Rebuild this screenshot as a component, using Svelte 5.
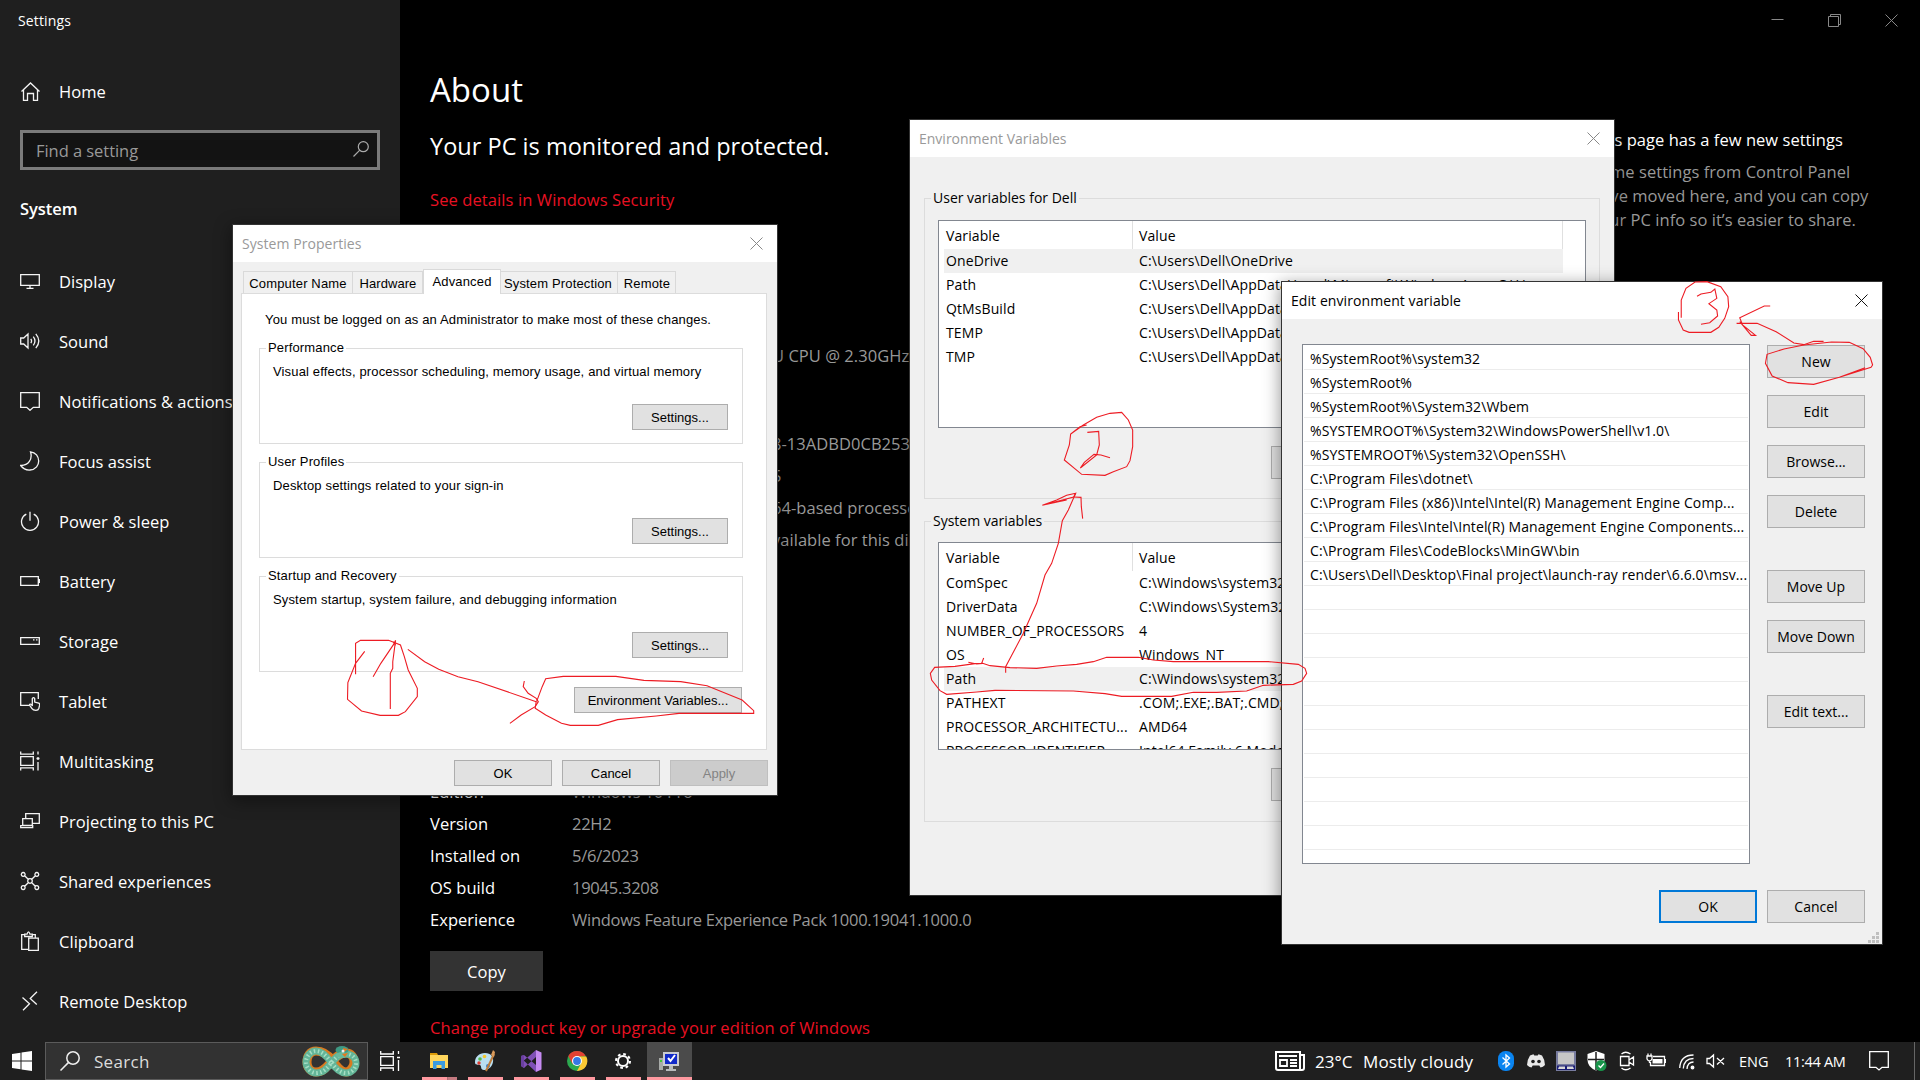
<script>
  const nav = [
    { label: 'Display', d: 'M.7 3.7h18.6v10.6H.7zM10 14.5v2.300M6.500 17.300h7' },
    { label: 'Sound', d: 'M.7 7v6h3l4.300 4V3L3.700 7zM10.800 7.800q1.500 2.200 0 4.400M13.300 5.700q3.300 4.300 0 8.600M15.800 2.800q6 7.200 0 14.400' },
    { label: 'Notifications & actions', d: 'M.7 1.700h18.600v14.600h-6L10 19.300l-3.300-3H.7z' },
    { label: 'Focus assist', d: 'M10.500.8c10.500 1 11.500 17.200-.5 18.200-4.300.3-7.300-1.700-9.300-4.500C8.500 14.700 12.800 8 10.500.8z' },
    { label: 'Power & sleep', d: 'M10 .7v9M6.300 3.200a8.500 8.500 0 1 0 7.400 0' },
    { label: 'Battery', d: 'M.7 5.700h17.600v8.600H.7zM19.500 8v4' },
    { label: 'Storage', d: 'M.7 6.700h18.600v6.600H.7zM13 8.900h1.500M16 8.900h1.500' },
    { label: 'Tablet', d: 'M9 14.300H.7V1.700h17.600V8M12.300 15V7.500q1.200-1.700 2.400 0V11l4 1.200q1.200.4.900 2l-.7 3q-.6 2.100-3 2.100-2.800 0-3.900-1.700l-2.500-3.600q.2-1.500 2-.5z' },
    { label: 'Multitasking', d: 'M.7.500v2.700h12.600V.5M.7 5.700h12.600v8.600H.7zM.7 19.500v-2.700h12.600v2.700M18 .5v3M18 11v8.500M16.500 7.500h3M18 6v3' },
    { label: 'Projecting to this PC', d: 'M5.700 7V2.700h13.600v9.600h-6.500M2.700 7.700h9.600v6.600H2.700zM.7 14.700h12v2H.7z' },
    { label: 'Shared experiences', d: 'M4.700 4.700l3.500 3.500M15.300 4.700l-3.500 3.500M4.700 15.300l3.500-3.500M15.300 15.300l-3.500-3.500M3.200 1.500a1.900 1.900 0 1 0 .01 0zM16.800 1.500a1.900 1.900 0 1 0 .01 0zM3.200 14.700a1.900 1.900 0 1 0 .01 0zM16.800 14.700a1.900 1.900 0 1 0 .01 0zM10 7.700a2.300 2.300 0 1 0 .01 0z' },
    { label: 'Clipboard', d: 'M8 18.300H1.700V3.700h3V5.500h7.600V3.700h3v3M4.700 5.500V3.200h2.300q1.500-4.500 3 0h2.300v2.300M8.700 7.200h9.600v12.100H8.700z' },
    { label: 'Remote Desktop', d: 'M17 .7L10.200 7.500l6.600 6M2.500 6.500l7 6.300-6.500 6.500' }
  ];

  const fragments = ['U CPU @ 2.30GHz', '', '8-13ADBD0CB253', '5', '64-based processor', 'vailable for this display'];

  const specs = [
    ['Edition', 'Windows 10 Pro'],
    ['Version', '22H2'],
    ['Installed on', '5/6/2023'],
    ['OS build', '19045.3208'],
    ['Experience', 'Windows Feature Experience Pack 1000.19041.1000.0']
  ];

  const groups = [
    ['Performance', 'Visual effects, processor scheduling, memory usage, and virtual memory'],
    ['User Profiles', 'Desktop settings related to your sign-in'],
    ['Startup and Recovery', 'System startup, system failure, and debugging information']
  ];

  const tables = [
    {
      title: 'User variables for Dell',
      selected: 0,
      rows: [
        ['OneDrive', 'C:\\Users\\Dell\\OneDrive'],
        ['Path', 'C:\\Users\\Dell\\AppData\\Local\\Microsoft\\WindowsApps;C:\\Users...'],
        ['QtMsBuild', 'C:\\Users\\Dell\\AppData'],
        ['TEMP', 'C:\\Users\\Dell\\AppData'],
        ['TMP', 'C:\\Users\\Dell\\AppData']
      ]
    },
    {
      title: 'System variables',
      selected: 4,
      rows: [
        ['ComSpec', 'C:\\Windows\\system32'],
        ['DriverData', 'C:\\Windows\\System32'],
        ['NUMBER_OF_PROCESSORS', '4'],
        ['OS', 'Windows_NT'],
        ['Path', 'C:\\Windows\\system32'],
        ['PATHEXT', '.COM;.EXE;.BAT;.CMD;.'],
        ['PROCESSOR_ARCHITECTU...', 'AMD64'],
        ['PROCESSOR_IDENTIFIER', 'Intel64 Family 6 Model']
      ]
    }
  ];

  const paths = [
    '%SystemRoot%\\system32',
    '%SystemRoot%',
    '%SystemRoot%\\System32\\Wbem',
    '%SYSTEMROOT%\\System32\\WindowsPowerShell\\v1.0\\',
    '%SYSTEMROOT%\\System32\\OpenSSH\\',
    'C:\\Program Files\\dotnet\\',
    'C:\\Program Files (x86)\\Intel\\Intel(R) Management Engine Comp...',
    'C:\\Program Files\\Intel\\Intel(R) Management Engine Components...',
    'C:\\Program Files\\CodeBlocks\\MinGW\\bin',
    'C:\\Users\\Dell\\Desktop\\Final project\\launch-ray render\\6.6.0\\msv...',
    ...Array(11).fill('')
  ];
</script>

{#snippet cross()}
  <svg class="cross" viewBox="0 0 13 13"><path d="M.5.5l12 12M12.500.5l-12 12" /></svg>
{/snippet}

<div class="screen">
  <div class="settings">
    <aside>
      <div class="apptitle">Settings</div>
      <div class="home item">
        <svg viewBox="0 0 20 20"><path d="M1.500 9.500L10.500 1l9 8.500M3.500 8v10.300h4V11.500h6v6.800h4V8" /></svg>
        <span>Home</span>
      </div>
      <div class="find">
        <span>Find a setting</span>
        <svg viewBox="0 0 16 16"><circle cx="10.300" cy="5.700" r="5" /><path d="M6.800 9.200L.5 15.500" /></svg>
      </div>
      <div class="section">System</div>
      <nav>
        {#each nav as n}
          <div class="item">
            <svg viewBox="0 0 20 20"><path d={n.d} /></svg>
            <span>{n.label}</span>
          </div>
        {/each}
      </nav>
    </aside>

    <main>
      <h1>About</h1>
      <h2>Your PC is monitored and protected.</h2>
      <div class="link">See details in Windows Security</div>
      <div class="device">
        {#each fragments as f}<div>{f}</div>{/each}
      </div>
      <div class="specs">
        {#each specs as [k, v]}
          <div class="spec"><span>{k}</span><span class="dim">{v}</span></div>
        {/each}
      </div>
      <button class="copy">Copy</button>
      <div class="link key">Change product key or upgrade your edition of Windows</div>
    </main>

    <section class="side">
      <div class="winctl">
        <svg viewBox="0 0 13 13"><path d="M.5 5.500h12" /></svg>
        <svg viewBox="0 0 13 13"><path d="M.5 2.500h10v10H.5zM2.500 2.500v-2h10v10h-2" /></svg>
        <svg viewBox="0 0 13 13"><path d="M.5.5l12 12M12.500.5l-12 12" /></svg>
      </div>
      <div class="note">
        <b>This page has a few new settings</b>
        <p>Some settings from Control Panel<br />have moved here, and you can copy<br />your PC info so it’s easier to share.</p>
      </div>
    </section>
  </div>

  <div class="dialog env">
    <header><span>Environment Variables</span>{@render cross()}</header>
    <div class="envbody">
      {#each tables as t}
        <fieldset class="group">
          <legend>{t.title}</legend>
          <div class="table">
            <div class="tr head"><span>Variable</span><span>Value</span></div>
            {#each t.rows as [a, b], i}
              <div class="tr" class:sel={i === t.selected}><span>{a}</span><span>{b}</span></div>
            {/each}
          </div>
          <div class="actions"><button aria-label="New"></button></div>
        </fieldset>
      {/each}
    </div>
  </div>

  <div class="dialog props">
    <header><span>System Properties</span>{@render cross()}</header>
    <div class="tabs">
      <div class="tab t1">Computer Name</div>
      <div class="tab t2">Hardware</div>
      <div class="tab t3">Advanced</div>
      <div class="tab t4">System Protection</div>
      <div class="tab t5">Remote</div>
    </div>
    <div class="pane">
      <div class="hint">You must be logged on as an Administrator to make most of these changes.</div>
      {#each groups as [t, d]}
        <fieldset class="pgroup">
          <legend>{t}</legend>
          <div class="desc">{d}</div>
          <button>Settings...</button>
        </fieldset>
      {/each}
      <button class="envbtn">Environment Variables...</button>
    </div>
    <footer><button>OK</button><button>Cancel</button><button disabled>Apply</button></footer>
  </div>

  <div class="dialog edit">
    <header><span>Edit environment variable</span>{@render cross()}</header>
    <div class="editbody">
      <div class="list">
        {#each paths as p}<div class="row">{p}</div>{/each}
      </div>
      <div class="stack">
        <button>New</button><button>Edit</button><button>Browse...</button><button>Delete</button>
        <button class="gap1">Move Up</button><button>Move Down</button>
        <button class="gap1">Edit text...</button>
      </div>
    </div>
    <footer><button class="primary">OK</button><button>Cancel</button></footer>
    <svg class="grip" viewBox="0 0 11 11"><path d="M8 0h3v3H8zM4 4h3v3H4zM8 4h3v3H8zM0 8h3v3H0zM4 8h3v3H4zM8 8h3v3H8z" /></svg>
  </div>

  <svg class="ink" viewBox="0 0 1920 1080">
    <g transform="translate(230 500) scale(.35077 .33333)">
      <polyline points="358,523 358,430 372,421 452,421 486,435 497,470 508,510 534,565 534,590 500,635 480,646 428,646 375,633 335,598 336,548 358,490 384,454" />
      <polyline points="408,530 430,490 466,434 472,421 464,485 464,505 457,520 457,627" />
      <polyline points="466,425 472,436" />
      <polyline points="507,448 555,485 595,508 650,530 707,545 873,605" />
      <polyline points="839,543 836,560 850,580 873,595 879,605 870,620 830,645 798,670" />
      <polyline points="874,605 890,560 900,536 950,529 1100,529 1180,541 1285,545 1360,557 1460,600 1493,632 1493,640 1280,640 1215,648 1105,659 1050,676 970,676 945,670 900,645 870,625 873,605" />
    </g>
    <g transform="translate(900 110) scale(.33333)">
      <polyline points="560,945 540,950 512,972 508,1005 493,1050 545,1093 615,1096 640,1085 680,1070 690,1052 698,1010 698,960 685,930 665,907 630,910 590,922 550,945 512,972" />
      <polyline points="562,967 596,964 598,1005 590,1035 541,1074 553,1057 582,1033 603,1035 630,1043" />
    </g>
    <g transform="translate(900 500) scale(.33333)">
      <polyline points="500,0 427,16 470,0 500,-14 527,-20 521,-9 427,16" />
      <polyline points="521,-9 543,-8 544,20 548,56" />
      <polyline points="317,518 317,500 370,400 410,310 435,225 455,190 475,130 487,62 505,30 527,-20" />
      <polyline points="205,487 230,492 248,490 270,497 330,503 410,505 470,498 530,493 580,485 620,472 715,472 760,480 820,485 1105,485 1195,493 1215,505 1220,520 1205,543 1180,553 1090,556 1040,573 950,577 880,577 815,589 665,589 615,581 520,573 285,571 230,576 140,583 120,572 95,540 91,520 104,502 165,499 225,491 245,490 251,474" />
    </g>
    <g transform="translate(1270 270) scale(.39541 .33333)">
      <polyline points="1040,143 1040,90 1052,55 1075,36 1105,35 1140,50 1158,80 1160,110 1150,145 1135,172 1115,187 1060,187 1045,180 1033,150 1033,126" />
      <polyline points="1080,79 1090,72 1115,67 1125,57 1130,85 1110,101 1130,120 1132,138 1112,158 1090,163" />
      <polyline points="1400,214 1375,214 1350,224 1325,219 1280,185 1232,160 1180,160" />
      <polyline points="1265,108 1250,108 1188,143 1195,165 1228,196 1217,196 1188,155" />
      <polyline points="1505,293 1440,322 1375,343 1310,338 1270,318 1253,280 1257,253 1300,237 1350,225 1420,216 1465,217 1500,236 1518,262 1524,285 1520,292 1440,322" />
    </g>
  </svg>

  <div class="taskbar">
    <div class="start">
      <svg viewBox="0 0 20 20"><path d="M0 3l8.500-1.200v7.700H0zM9.500 1.600L20 0v9.500H9.500zM0 10.500h8.500v7.700L0 17zM9.500 10.500H20V20L9.500 18.400z" /></svg>
    </div>
    <div class="search">
      <svg class="mag" viewBox="0 0 20 20"><circle cx="13" cy="7" r="6.200" /><path d="M8.600 11.400L.5 19.500" /></svg>
      <span>Search</span>
      <svg class="snake" viewBox="0 0 58 32">
        <path class="orange" d="M31 16C25 8 20 6 14 6S5 11 5 17s4 10 9 10c8 0 12-7 17-12s8-7 13-7 8 4 8 9-4 10-8 10-9-5-13-11z" />
        <path class="green" d="M29 17C23 9 19 6 14 6S4 11 4 17s5 11 10 11c8 0 12-6 17-12s8-7 13-7c6 0 10 4 10 9s-4 10-10 10c-6 0-11-5-15-11z" />
        <path class="scales" d="M29 17C23 9 19 6 14 6S4 11 4 17s5 11 10 11c8 0 12-6 17-12s8-7 13-7c6 0 10 4 10 9s-4 10-10 10c-6 0-11-5-15-11z" />
        <ellipse cx="40" cy="5" rx="6.500" ry="4" fill="#3f9a84" /><ellipse cx="40" cy="10" rx="6" ry="3" fill="#68b99b" />
        <path d="M41 3l5 1-4 3zM40 9l6-1-3 4z" fill="#e5771c" /><circle cx="41" cy="6" r="1.500" fill="#eee" />
      </svg>
    </div>
    <div class="cell tv"><svg class="line" viewBox="0 0 20 20"><path d="M.7 0v3h12.600V0M.7 5.700h12.600v8.600H.7zM.7 20v-3h12.600v3M18.500 0v3M18.500 9v11M17 6.500h3" /></svg></div>
    <div class="apps">
      <div class="app files">
        <svg viewBox="0 0 22 22"><path d="M2 3h7l1 2h-8z" fill="#dd9b08" /><path d="M2 5h18v13H2z" fill="#ffd65c" /><path d="M5 19v-8h12v8h-3.500v-4h-5v4z" fill="#3b9be0" /></svg>
      </div>
      <div class="app">
        <svg viewBox="0 0 22 22"><path d="M11 3c6 0 9 4 8 9-1 6-6 8-9 8-4 0-2-4-4-5s-5 1-5-3c0-5 4-9 10-9z" fill="#b9dff1" /><circle cx="6" cy="9" r="1.800" fill="#57b947" /><circle cx="10.500" cy="6.500" r="1.800" fill="#f4c62b" /><circle cx="5" cy="13" r="1.700" fill="#dd3b30" /><circle cx="14" cy="16" r="2" fill="#3b7fc7" /><path d="M20 4l-8 17" stroke="#bd7c3b" stroke-width="2" /><path d="M17 5l2-5 2 2-1 5z" fill="#d99a5b" /></svg>
      </div>
      <div class="app">
        <svg viewBox="0 0 22 22"><path d="M1 6l3-1 12 10V22L1 8zM1 16l3 2L16 7V0L1 13z" fill="#8050b8" /><path d="M1 6l3-1v13l-3-2z" fill="#6a40a0" /><path d="M16 0l5.500 2.500v17L16 22z" fill="#c68bf2" /></svg>
      </div>
      <div class="app">
        <svg viewBox="0 0 22 22"><circle cx="11" cy="11" r="10" fill="#2ca94f" /><path d="M2.300 6A10 10 0 0 1 19.700 6L11 7l-4.500 7z" fill="#e34133" /><path d="M11 6.500h9.300A10 10 0 0 1 11 21l4.300-8z" fill="#fcc934" /><circle cx="11" cy="11" r="5" fill="#fff" /><circle cx="11" cy="11" r="3.900" fill="#3578e5" /></svg>
      </div>
      <div class="app">
        <svg viewBox="0 0 22 22"><circle cx="11" cy="11" r="5" fill="none" stroke="#fff" stroke-width="2" /><circle cx="11" cy="11" r="7" fill="none" stroke="#fff" stroke-width="2" stroke-dasharray="2.749 2.749" /></svg>
      </div>
      <div class="app active">
        <svg viewBox="0 0 22 22"><path d="M1 8h4v12H1z" fill="#a8aba8" /><path d="M5 2h16v14H5z" fill="#c9cbd2" /><path d="M7 4h12v10H7z" fill="#1029c9" /><path d="M10 8l2.500 3L17 5" fill="none" stroke="#fff" stroke-width="2" /><path d="M11 16h4v3h3v2H8v-2h3z" fill="#b8bbbc" /><path d="M2 10h2v2H2z" fill="#41c735" /></svg>
      </div>
    </div>
    <div class="tray">
      <svg class="news" viewBox="0 0 30 20"><path d="M1 1h24v18H3q-2 0-2-2zM25 4h4v13q0 2-2 2h-2" fill="none" stroke="#fff" stroke-width="2" /><path d="M4 5h18M15 9h7M15 12h7M15 15h7" stroke="#fff" stroke-width="1.800" /><path d="M5 9h7v6H5z" fill="none" stroke="#fff" stroke-width="1.800" /></svg>
      <span class="temp">23°C</span><span class="sky">Mostly cloudy</span>
      <svg class="bt" viewBox="0 0 16 20"><rect width="16" height="20" rx="7.500" fill="#0a84f0" /><path d="M4.500 6.500l7 6.500L8 16V4l3.500 3-7 6.500" fill="none" stroke="#fff" stroke-width="1.300" /></svg>
      <svg class="dc" viewBox="0 0 18 14"><path d="M3 1.500L6.500.3l.8 1.200h3.400l.8-1.200L15 1.500q3 4.500 3 9.500-2 2-4.500 2.500l-1.200-2H5.700l-1.200 2Q2 13 0 11q0-5 3-9.500z" fill="#e8e8e8" /><circle cx="6" cy="7.500" r="1.800" fill="#1f1f1f" /><circle cx="12" cy="7.500" r="1.800" fill="#1f1f1f" /></svg>
      <svg class="mon" viewBox="0 0 20 20"><path d="M0 0h20v20H0z" fill="#777b9e" /><path d="M2 1.500h16V13H2z" fill="#c6c6c6" /><path d="M1 14.500h18V19H1z" fill="#1a1d75" /><path d="M3 15.500h6v2.500H2zM11 15.500h6l1 2.500h-7z" fill="#d8d8d8" /></svg>
      <svg class="shield" viewBox="0 0 20 20"><path d="M9 0l8.500 3v6q0 7-8.500 10.500Q.5 16 .5 9V3z" fill="#fff" /><path d="M9 1v18M1 8.500h16" stroke="#1f1f1f" stroke-width="1.500" /><circle cx="14" cy="14.500" r="5.500" fill="#18944a" /><path d="M11.500 14.500l2 2 3.500-4" stroke="#fff" stroke-width="1.300" fill="none" /></svg>
      <svg class="cam" viewBox="0 0 16 20"><path d="M1.500 5.500h8.500v9H1.500zM10 9l4.500-3v8L10 11M2.500 3q4-3.500 9 0M2.500 17q4 3.500 9 0" /></svg>
      <svg class="pwr" viewBox="0 0 20 20"><path d="M7 5.500h11.500v9H4.500V11M19.500 8v4M1 5h5v3q-1 2-2.500 2T1 8zM2 5V2.500M5 5V2.500M3.500 10v2" /><path d="M6.500 8h10v4.500h-10z" fill="#fff" stroke="none" /></svg>
      <svg class="wifi" viewBox="0 0 16 20"><path d="M.7 17Q1.500 4 14.500 4M4.300 17.500Q5 7.500 14.500 7.500M8 18Q8.500 11 14.500 11" /><circle cx="13.500" cy="16.500" r="1.300" fill="#fff" /></svg>
      <svg class="mute" viewBox="0 0 19 20"><path d="M1 7.500v5h2.500l4 3.500V4l-4 3.500zM11 7l7 6.500M18 7l-7 6.500" /></svg>
      <span class="lang">ENG</span><span class="clock">11:44 AM</span>
      <svg class="bell" viewBox="0 0 20 20"><path d="M.7.7h18.600v15.600H13L10 19l-3-2.700H.7z" /></svg>
      <i></i>
    </div>
  </div>
</div>

<style>
  :global(body) { margin: 0; background: #000; overflow: hidden; }
  .screen { position: relative; width: 1920px; height: 1080px; overflow: hidden; background: #000; font-family: 'Open Sans', 'Noto Sans', sans-serif; color: #fff; }
  .screen * { box-sizing: border-box; }
  button { font: inherit; padding: 0; margin: 0; border-radius: 0; white-space: nowrap; }
  svg { display: block; flex: none; }

  .settings { display: flex; height: 1042px; font-size: 16.500px; letter-spacing: .04px; white-space: nowrap; }
  aside { width: 400px; height: 1080px; background: #1f1f1f; flex: none; }
  .apptitle { height: 61px; padding: 10px 0 0 18px; font-size: 14px; line-height: 21px; letter-spacing: .15px; }
  .item { height: 60px; display: flex; align-items: center; padding-left: 20px; gap: 19px; }
  .item svg { width: 20px; height: 20px; fill: none; stroke: #f4f4f4; stroke-width: 1.300; }
  .item span { line-height: 24px; padding-top: 1px; }
  .home { height: 61px; }
  .home span { padding-top: 0; }
  .find { margin: 8px 20px 0; height: 40px; border: 3px solid #7a7a7a; background: #131313; display: flex; align-items: center; justify-content: space-between; padding: 0 8px 0 13px; color: #999; letter-spacing: -.05px; }
  .find svg { width: 16px; height: 16px; fill: none; stroke: #aaa; stroke-width: 1.200; margin-top: -2px; }
  .section { margin: 26px 0 0 20px; height: 55px; line-height: 26px; font-weight: 600; letter-spacing: -.05px; }
  main { width: 1150px; padding-left: 30px; flex: none; }
  h1 { font-size: 33px; line-height: 48px; margin: 66px 0 0; font-weight: 400; letter-spacing: 0; }
  h2 { font-size: 23.500px; line-height: 36px; margin: 14px 0 0; font-weight: 400; letter-spacing: .02px; }
  .link { color: #e81123; line-height: 24px; margin-top: 24px; letter-spacing: .1px; }
  .device { margin: 128px 0 0 342px; color: #999; line-height: 32px; }
  .device div { height: 32px; }
  .device div:nth-child(2) { height: 56px; }
  .specs { margin-top: 220px; }
  .spec { height: 32px; line-height: 32px; display: grid; grid-template-columns: 142px 1fr; }
  .dim { color: #999; letter-spacing: -.25px; }
  .copy { display: block; width: 113px; height: 40px; margin-top: 15px; background: #333; border: 0; color: #fff; font-size: 16.500px; letter-spacing: .04px; }
  .key { margin-top: 25px; }
  .side { flex: 1; display: flex; flex-direction: column; }
  .winctl { display: flex; gap: 44px; padding: 14px 0 0 221px; }
  .winctl svg { width: 13px; height: 13px; fill: none; stroke: #888; }
  .note { margin: 101px 0 0 41px; }
  .note b { font-weight: 400; line-height: 24px; display: block; }
  .note p { margin: 8px 0 0; line-height: 24px; color: #999; }

  .dialog { position: absolute; background: #f0f0f0; color: #000; outline: 1px solid #333; box-shadow: 0 4px 16px 2px rgba(0, 0, 0, .4); font-size: 14px; letter-spacing: .1px; white-space: nowrap; }
  .dialog header { height: 37px; background: #fff; display: flex; align-items: center; justify-content: space-between; padding: 0 14px 1px 9px; color: #999; letter-spacing: 0; }
  .cross { width: 13px; height: 13px; fill: none; stroke: #888; }
  .dialog button { background: #e1e1e1; border: 1px solid #adadad; color: #000; letter-spacing: 0; }
  .dialog button:disabled { background: #ccc; border-color: #bfbfbf; color: #838383; }
  fieldset { margin: 0; padding: 0; min-width: 0; border: 1px solid #dcdcdc; }
  legend { line-height: 20px; padding: 0 2px; margin-left: 6px; }

  .env { left: 910px; top: 120px; width: 704px; height: 775px; overflow: hidden; }
  .envbody { padding: 31px 14px 0; }
  .group { height: 311px; width: 676px; margin-bottom: 12px; }
  .group legend { margin-left: 6px; letter-spacing: 0; }
  .table { width: 648px; height: 208px; margin: 12px 0 0 13px; border: 1px solid #828790; background: #fff; overflow: hidden; }
  .group:last-child .table { margin-top: 11px; }
  .tr { display: grid; grid-template-columns: 189px 1fr; height: 24px; line-height: 24px; margin: 0 22px 0 5px; overflow: hidden; }
  .tr span { padding-left: 2px; overflow: hidden; }
  .tr span + span { padding-left: 6px; }
  .tr.head { height: 28px; line-height: 30px; }
  .tr.head span { border-right: 1px solid #e0e0e0; }
  .sel { background: #f0f0f0; }
  .actions { margin: 18px 0 0 346px; display: flex; }
  .actions button { width: 98px; height: 33px; }

  .props { left: 233px; top: 225px; width: 544px; height: 570px; font-family: 'Liberation Sans', Arial, sans-serif; font-size: 13px; letter-spacing: .15px; }
  .props header { font-family: 'Open Sans', sans-serif; font-size: 14px; letter-spacing: .05px; }
  .tabs { display: flex; align-items: flex-end; height: 31px; padding: 7px 0 0 10px; }
  .tab { height: 22px; border: 1px solid #d9d9d9; border-width: 1px 1px 0 0; text-align: center; line-height: 24px; }
  .t1 { width: 110px; border-left-width: 1px; }
  .t2 { width: 70px; padding-left: 1px; letter-spacing: .05px; }
  .t3 { width: 78px; height: 25px; background: #fff; z-index: 1; border-left-width: 1px; margin-bottom: -1px; }
  .t4 { width: 117px; padding-right: 2px; }
  .t5 { width: 58px; padding-left: 1px; }
  .pane { margin: 0 10px 0 8px; height: 457px; background: #fff; border: 1px solid #dcdcdc; padding: 17px 0 0 17px; }
  .hint { margin-left: 6px; line-height: 18px; height: 28px; }
  .pgroup { width: 484px; height: 105px; margin-bottom: 9px; display: flow-root; }
  .pgroup legend { line-height: 18px; margin-left: 6px; }
  .desc { margin: 7px 0 0 13px; line-height: 16px; }
  .pgroup button { display: block; width: 96px; height: 26px; margin: 24px 0 0 372px; }
  .envbtn { display: block; width: 168px; height: 26px; margin: 15px 0 0 315px; }
  .props footer { display: flex; gap: 10px; padding: 10px 9px 0; justify-content: flex-end; }
  .props footer button { width: 98px; height: 26px; }

  .edit { left: 1282px; top: 282px; width: 600px; height: 662px; }
  .edit header { color: #000; letter-spacing: .08px; }
  .edit .cross { stroke: #111; }
  .editbody { display: flex; gap: 17px; padding: 25px 17px 0 20px; }
  .list { width: 448px; height: 520px; border: 1px solid #828790; background: #fff; padding: 1px 1px 0; overflow: hidden; }
  .row { height: 24px; border-bottom: 1px solid #ececec; line-height: 25px; padding-left: 6px; }
  .stack { display: flex; flex-direction: column; gap: 17px; padding-top: 1px; }
  .stack button, .edit footer button { width: 98px; height: 33px; }
  .gap1 { margin-top: 25px; }
  .edit footer { display: flex; justify-content: flex-end; gap: 10px; padding: 26px 17px 0 0; }
  .edit .primary { border: 2px solid #0078d7; }
  .grip { position: absolute; right: 3px; bottom: 1px; width: 11px; height: 11px; fill: #bfbfbf; }

  .ink { position: absolute; left: 0; top: 0; width: 1920px; height: 1080px; }
  .ink polyline { fill: none; stroke: #ed1c24; stroke-width: 1.100; vector-effect: non-scaling-stroke; }

  .taskbar { position: absolute; left: 0; top: 1042px; width: 1920px; height: 38px; background: #1f1f1f; display: flex; font-size: 17px; white-space: nowrap; }
  .start { width: 45px; padding: 9px 0 0 12px; }
  .start svg { width: 20px; height: 20px; fill: #fff; }
  .search { width: 323px; height: 38px; border: 1px solid #5b5b5b; background: #323232; display: flex; align-items: center; padding-left: 14px; color: #dcdcdc; letter-spacing: .3px; }
  .search span { width: 208px; margin-left: 14px; }
  .mag { width: 20px; height: 20px; fill: none; stroke: #eee; stroke-width: 1.500; }
  .snake { width: 58px; height: 32px; fill: none; }
  .orange { stroke: #d87a20; stroke-width: 9; }
  .green { stroke: #63b598; stroke-width: 7; }
  .scales { stroke: #a5dec4; stroke-width: 4; stroke-dasharray: 1.500 2.500; }
  .cell { width: 54px; padding: 9px 0 0 12px; }
  .line { width: 20px; height: 20px; fill: none; stroke: #fff; stroke-width: 1.300; }
  .apps { display: flex; gap: 11px; }
  .app { width: 35px; height: 38px; border-bottom: 3px solid #ff99a0; display: flex; align-items: center; justify-content: center; }
  .app svg { width: 22px; height: 22px; margin: 2px 2px 0 0; }
  .files { border-image: linear-gradient(90deg, #ff99a0 24px, #a96a70 24px, #c47a80 25px) 3; }
  .active { width: 45px; background: #4b4b4b; margin-left: -5px; }
  .tray { flex: 1; display: flex; align-items: center; padding-left: 583px; }
  .tray svg { height: 20px; }
  .news { width: 30px; }
  .temp { width: 48px; margin-left: 10px; }
  .sky { width: 135px; letter-spacing: .1px; }
  .bt { width: 16px; margin-right: 13px; }
  .tray .dc { width: 18px; height: 14px; margin-right: 11px; }
  .mon { width: 20px; margin-right: 11px; }
  .shield { width: 20px; margin-right: 12px; }
  .cam, .pwr, .wifi, .mute, .bell { fill: none; stroke: #fff; stroke-width: 1.300; }
  .cam { width: 16px; margin-right: 11px; }
  .pwr { width: 20px; margin-right: 13px; }
  .wifi { width: 16px; margin-right: 11px; }
  .mute { width: 19px; margin-right: 14px; }
  .lang, .clock { font-size: 14.500px; letter-spacing: -.3px; }
  .lang { width: 46px; letter-spacing: 0; }
  .clock { width: 84px; }
  .bell { width: 20px; margin-right: 25px; }
  .tray i { width: 1px; height: 38px; background: #666; }
</style>
